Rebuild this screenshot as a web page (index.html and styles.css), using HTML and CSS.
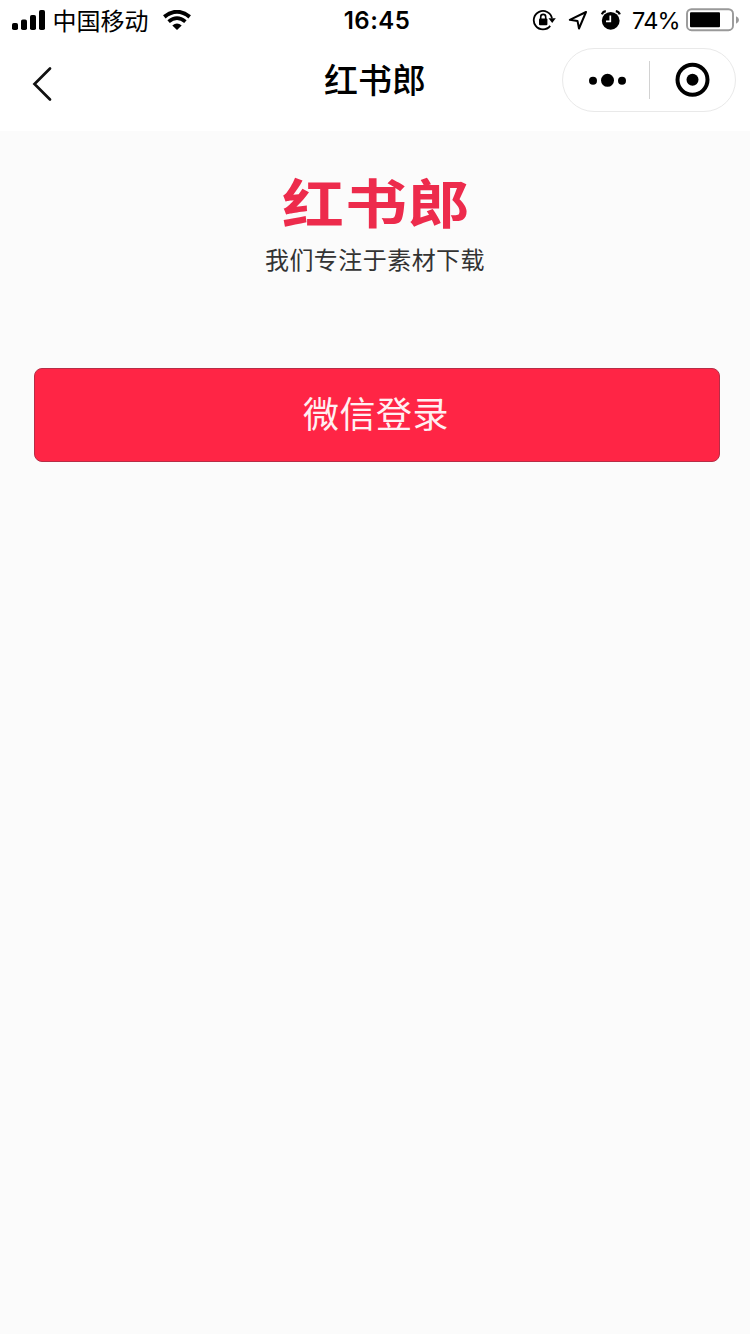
FILE: index.html
```html
<!DOCTYPE html>
<html lang="zh-CN">
<head>
<meta charset="utf-8">
<title>红书郎</title>
<link rel="stylesheet" href="styles.css">
</head>
<body>
<div class="status-bar">
  <div class="status-left">
    <svg class="signal" width="34" height="20" viewBox="0 0 34 20"><rect x="0" y="13" width="6" height="7" rx="1.8"/><rect x="9" y="9.5" width="6" height="10.5" rx="1.8"/><rect x="18" y="5" width="6" height="15" rx="1.8"/><rect x="27" y="0" width="6" height="20" rx="1.8"/></svg>
    <span class="carrier">中国移动</span>
    <svg class="wifi" width="28" height="20" viewBox="0 0 28 20"><path d="M1.3 6.9Q14-3.3 26.7 6.9" fill="none" stroke="#000" stroke-width="4"/><path d="M5.6 11.7Q14 4.500 22.4 11.7" fill="none" stroke="#000" stroke-width="3.7"/><path d="M9.300 15.500Q14 11.500 18.700 15.500L14 20Z"/></svg>
  </div>
  <div class="time">16:45</div>
  <div class="status-right">
    <svg class="lock" width="24" height="22" viewBox="0 0 24 22"><path d="M18.200 16.900A9.200 9.200 0 1 1 20 9.400" fill="none" stroke="#000" stroke-width="1.800"/><path d="M16.500 9.200h7.300L20.200 14Z"/><rect x="7" y="9.600" width="8.400" height="6.700" rx="1"/><path d="M8.700 10V7.900a2.500 2.500 0 0 1 5 0V10" fill="none" stroke="#000" stroke-width="1.600"/></svg>
    <svg class="arrow" width="20" height="20" viewBox="0 0 20 20"><path d="M18 2L1.800 9.800L9.500 10.900L11 18.500Z" fill="none" stroke="#000" stroke-width="2" stroke-linejoin="round"/></svg>
    <svg class="alarm" width="20" height="20" viewBox="0 0 20 20"><circle cx="9.700" cy="10.800" r="8.900"/><path d="M.8 4.400Q1.800 1.700 4.800 1.200M18.800 4.400Q17.800 1.700 14.800 1.200" fill="none" stroke="#000" stroke-width="2.200"/><path d="M9.300 5.500V11.300H5" fill="none" stroke="#fff" stroke-width="1.700"/></svg>
    <span class="percent">74%</span>
    <svg class="battery" width="54" height="24" viewBox="0 0 54 24"><rect x="1" y="1.200" width="46" height="21" rx="4.500" fill="#fff" stroke="#999" stroke-width="1.900"/><rect x="4" y="4.300" width="30" height="15" rx="1"/><path d="M50 8.300Q53 9.500 53 12Q53 14.500 50 15.700Z" fill="#999"/></svg>
  </div>
</div>
<header class="nav">
  <svg class="back" width="22" height="36" viewBox="0 0 22 36"><path d="M19 2.500L3.500 18L19 33.500" fill="none" stroke="#111" stroke-width="2.700" stroke-linecap="round" stroke-linejoin="miter"/></svg>
  <h1 class="title">红书郎</h1>
  <div class="capsule">
    <svg class="more" width="38" height="14" viewBox="0 0 38 14"><circle cx="4" cy="7.700" r="4"/><circle cx="18.500" cy="7.300" r="6.500"/><circle cx="33" cy="7.700" r="4"/></svg>
    <span class="divider"></span>
    <svg class="target" width="36" height="36" viewBox="0 0 36 36"><circle cx="17.500" cy="17.700" r="15" fill="none" stroke="#000" stroke-width="4"/><circle cx="17.500" cy="17.700" r="6"/></svg>
  </div>
</header>
<main class="page">
  <div class="logo">红书郎</div>
  <p class="slogan">我们专注于素材下载</p>
  <button class="login">微信登录</button>
</main>
</body>
</html>
```
FILE: styles.css
```css
* { box-sizing: border-box; }
body {
  margin: 0;
  min-height: 1334px;
  display: flex;
  flex-direction: column;
  background: #fff;
  color: #000;
  font-family: "Noto Sans CJK SC", sans-serif;
}
svg { display: block; flex: none; }
.status-bar {
  height: 40px;
  display: grid;
  grid-template-columns: 330px 94px 326px;
  grid-template-rows: 40px;
}
.status-left { display: flex; align-items: center; padding-left: 12px; }
.carrier { margin-left: 6.5px; font-size: 24px; line-height: 40px; white-space: nowrap; }
.wifi { margin-left: 14.5px; }
.time {
  text-align: center;
  font: 600 24px/42px Inter, sans-serif;
  letter-spacing: 0.5px;
}
.status-right { display: flex; align-items: center; padding-left: 108px; }
.arrow { margin-left: 12px; }
.alarm { margin-left: 13px; }
.percent { margin-left: 11px; padding-top: 2px; width: 47px; font: 400 23.5px/38px Inter, sans-serif; letter-spacing: -0.8px; white-space: nowrap; }
.battery { margin-left: 7px; }
.nav {
  height: 91px;
  display: grid;
  grid-template-columns: 250px 250px 250px;
  align-items: start;
}
.back { margin: 26px 0 0 31px; }
.title {
  margin: 14px 0 0;
  text-align: center;
  font-size: 34px;
  font-weight: 500;
  line-height: 50px;
}
.capsule {
  width: 174px;
  height: 64px;
  margin: 8px 0 0 62px;
  padding-left: 26px;
  display: flex;
  align-items: center;
  border: 1px solid #e9e9e9;
  border-radius: 32px;
}
.divider { width: 1px; height: 38px; margin-left: 22px; background: #d2d2d2; }
.target { margin-left: 25px; }
.page {
  flex: 1;
  display: flex;
  flex-direction: column;
  align-items: center;
  padding-top: 38px;
  background: #fbfbfb;
}
.logo {
  height: 72px;
  padding-left: 3px;
  font-size: 62px;
  font-weight: 700;
  line-height: 72px;
  letter-spacing: 1px;
  color: #ed2b4c;
  transform: scaleY(0.86);
  transform-origin: 50% 4%;
}
.slogan {
  margin: 0;
  font-size: 24px;
  line-height: 36px;
  letter-spacing: 0.45px;
  color: #333;
}
.login {
  width: 686px;
  height: 94px;
  margin: 91px 0 0 4px;
  padding: 0 2px 7px 0;
  border: 1px solid #b72d46;
  border-radius: 8px;
  background: #ff2545;
  color: #fff0f2;
  font-family: inherit;
  font-size: 36px;
  font-weight: 400;
  letter-spacing: 0.5px;
}
```
